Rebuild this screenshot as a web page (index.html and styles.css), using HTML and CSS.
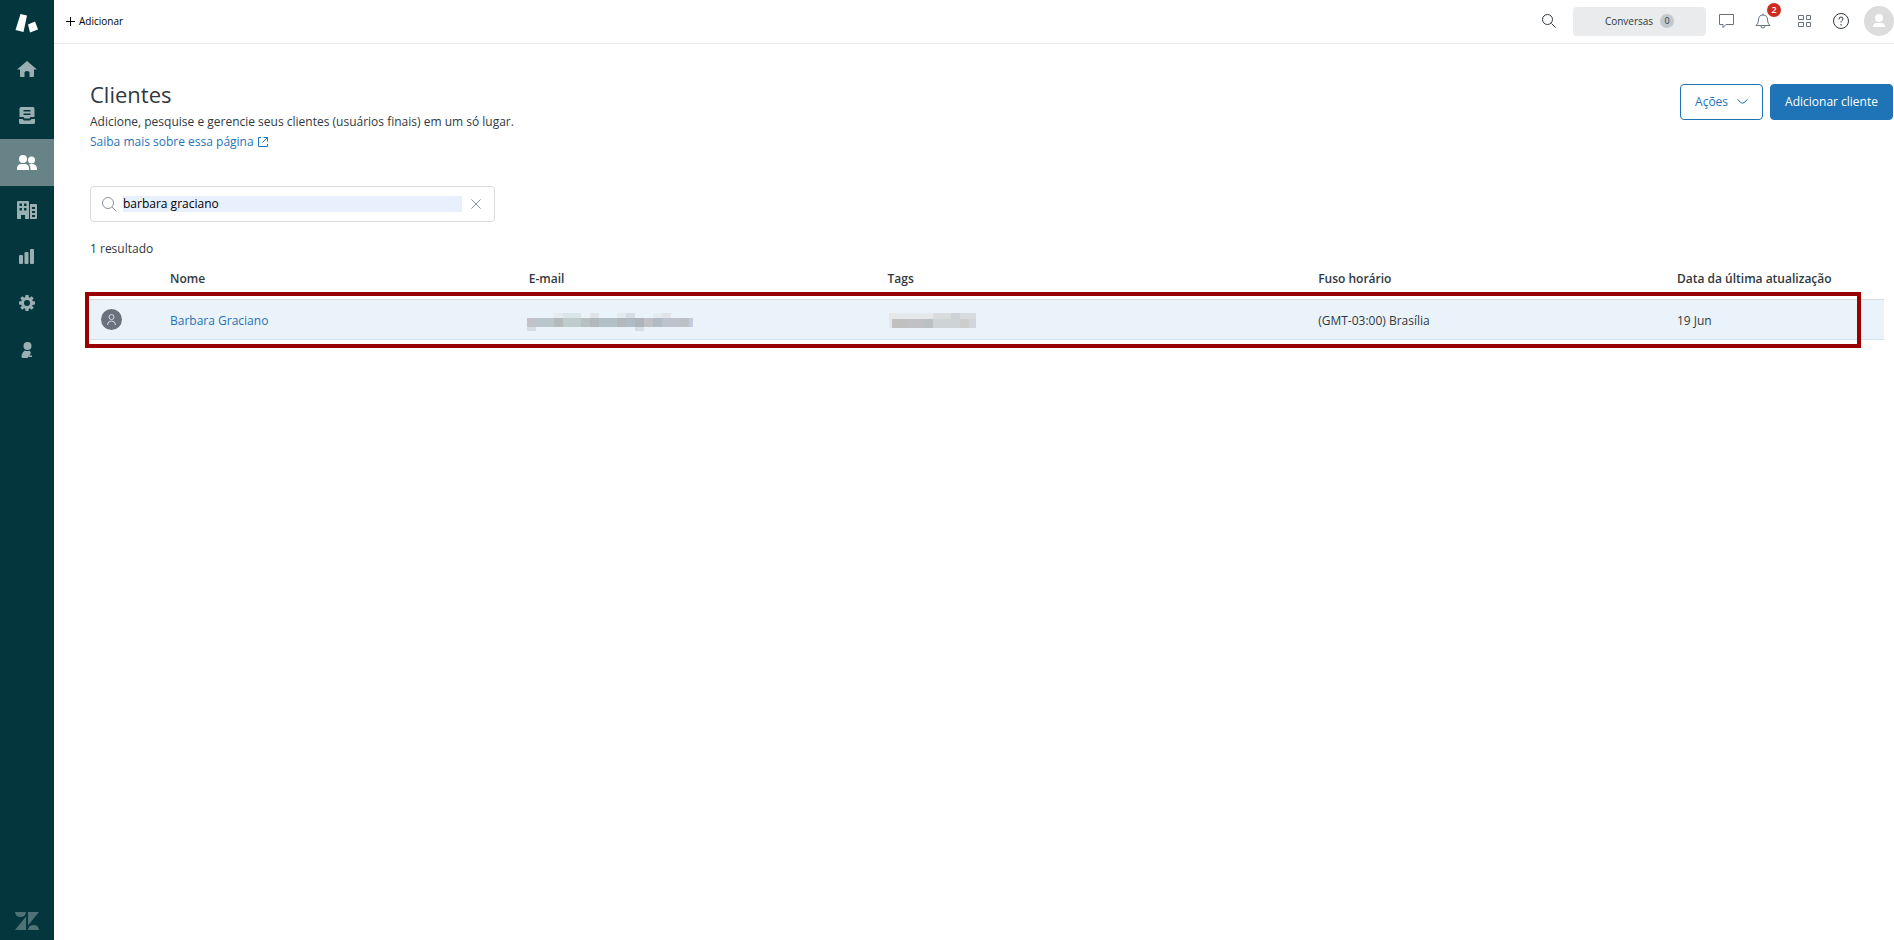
FILE: index.html
```
<!DOCTYPE html>
<html lang="pt-BR">
<head>
    <meta charset="UTF-8">
    <meta name="viewport" content="width=device-width, initial-scale=1.0">
    <title>Clientes</title>
    <link rel="stylesheet" href="styles.css">
</head>
<body>
    <div class="app">
        <nav class="sidebar" aria-label="Principal">
            <div class="logo">
                <svg width="24" height="20" viewBox="0 0 24 20"><path d="M5.500 1 12 2.500 8.500 19 .5 17zM13 11.500l7-3 3 8-8 3z" fill="#fff"/></svg>
            </div>
            <a href="#" class="nav-item" aria-label="Página inicial">
                <svg width="20" height="18" viewBox="0 0 20 18"><path d="M10 1 0 9.500h3V16q0 1 1 1h3.500v-4.500q0-1.500 2.500-1.500t2.500 1.500V17H16q1 0 1-1V9.500h3z"/></svg>
            </a>
            <a href="#" class="nav-item" aria-label="Visualizações">
                <svg width="16" height="18" viewBox="0 0 16 18"><path fill-rule="evenodd" d="M2 0Q.5 0 .5 1.500V10h4l1 1.500h5l1-1.500h4V1.500Q15.500 0 14 0zm2.500 3h7v1.500h-7zm0 3.500h7V8h-7zM0 12h3.500L5 13.500h6l1.500-1.500H16v3.500q0 1.500-1.500 1.500h-13Q0 17 0 15.500z"/></svg>
            </a>
            <a href="#" class="nav-item active" aria-label="Clientes">
                <svg width="20" height="18" viewBox="0 0 20 18"><circle cx="6" cy="5" r="4"/><circle cx="14.500" cy="6" r="3.500"/><path d="M0 16v-1.500q0-4.500 4.500-4.500h3q4.500 0 4.500 4.500V16zM13.500 16v-1.500q0-2.500-1.500-4 1-.5 2.500-.5 5.500 0 5.500 5v1z"/></svg>
            </a>
            <a href="#" class="nav-item" aria-label="Organizações">
                <svg width="20" height="18" viewBox="0 0 20 18"><path fill-rule="evenodd" d="M1 0h10q1 0 1 1v17H8v-4H4v4H0V1q0-1 1-1zm1.500 2.500V5H5V2.500zm4.500 0V5h2.500V2.500zM2.500 7v2.500H5V7zM7 7v2.500h2.500V7zM13 3h6q1 0 1 1v13q0 1-1 1h-6zm2 3v2h3V6zm0 4v2h3v-2zm0 4v2h3v-2z"/></svg>
            </a>
            <a href="#" class="nav-item" aria-label="Relatórios">
                <svg width="16" height="16" viewBox="0 0 16 16"><rect x="0" y="6" width="4" height="9" rx="1"/><rect x="5.500" y="3" width="4" height="12" rx="1"/><rect x="11" y="0" width="4" height="15" rx="1"/></svg>
            </a>
            <a href="#" class="nav-item" aria-label="Configurações">
                <svg width="18" height="18" viewBox="-9 -8 18 18"><circle r="4.500" fill="none" stroke="currentColor" stroke-width="3"/><path d="M-1.500-8h3l.5 3h-4zM-1.500 8h3l.5-3h-4zM-8-1.500v3l3 .5v-4zM8-1.500v3l-3 .5v-4zM-6.700-4.700l2-2 2.500 2-2.500 2.500zM6.700-4.700l-2-2-2.500 2 2.500 2.500zM-6.700 4.700l2 2 2.500-2-2.500-2.500zM6.700 4.700l-2 2-2.500-2 2.500-2.500z"/></svg>
            </a>
            <a href="#" class="nav-item" aria-label="Administrador">
                <svg width="12" height="17" viewBox="0 0 12 17"><circle cx="6.500" cy="4" r="4"/><path d="M4 8.500q2.500 1 4.500 0Q10.500 10 9.500 12t-3 4H2Q0 16 .5 14q.5-4 3.500-5.500z"/><path d="M8 13.500h3V15H8z"/></svg>
            </a>
            <div class="zendesk">
                <svg width="24" height="18" viewBox="0 0 24 18"><path d="M0 0h11Q10.500 5 5.500 5T0 0zM11 4.500V18H0zM13 13.500V0h11zM13 18q.5-5 5.500-5t5.500 5z"/></svg>
            </div>
        </nav>

        <div class="page">
            <header class="topbar">
                <button class="add">
                    <svg width="9" height="9" viewBox="0 0 9 9"><path d="M4.500 0v9M0 4.500h9" stroke="currentColor"/></svg>
                    Adicionar
                </button>
                <div class="tools">
                    <button class="tool search-tool" aria-label="Pesquisar">
                        <svg width="16" height="16" viewBox="0 0 16 16"><circle cx="6.500" cy="6.500" r="5"/><path d="m10.500 10.500 4 4"/></svg>
                    </button>
                    <button class="conversations">Conversas <span class="count">0</span></button>
                    <button class="tool" aria-label="Mensagens">
                        <svg width="16" height="16" viewBox="0 0 16 16"><path d="M.5 1.500h14v10H7l-3 3v-3H.5z"/></svg>
                    </button>
                    <button class="tool bell" aria-label="Notificações">
                        <svg width="16" height="16" viewBox="0 0 16 16"><path d="M1 12.500Q3.500 10.500 3.500 7q0-5 4.500-5t4.500 5q0 3.500 2.500 5.500zM6 13q0 2 2 2t2-2M8 .5V2"/></svg>
                        <span class="badge">2</span>
                    </button>
                    <button class="tool" aria-label="Produtos">
                        <svg width="14" height="14" viewBox="0 0 14 14"><path d="M.5 1.500h5v4h-5zM8.500 1.500h4v4h-4zM.5 8.500h5v4h-5zM8.500 8.500h4v4h-4z"/></svg>
                    </button>
                    <button class="tool help" aria-label="Ajuda">
                        <svg width="18" height="18" viewBox="0 0 18 18"><circle cx="9" cy="9" r="7.500"/><path d="M7 7.500Q7 5 9 5t2 2q0 1-1 1.500T9 10.500M9 12v1.500"/></svg>
                    </button>
                    <button class="avatar" aria-label="Perfil">
                        <svg width="30" height="30" viewBox="0 0 30 30"><circle cx="15" cy="15" r="15" fill="#dcdcdc"/><circle cx="15" cy="12" r="4" fill="#fff"/><path d="M9 21q0-4 4-4h4q4 0 4 4z" fill="#fff"/></svg>
                    </button>
                </div>
            </header>

            <main class="content">
                <div class="heading">
                    <div>
                        <h1>Clientes</h1>
                        <p>Adicione, pesquise e gerencie seus clientes (usuários finais) em um só lugar.</p>
                        <a href="#" class="learn-more">Saiba mais sobre essa página
                            <svg width="10" height="10" viewBox="0 0 10 10"><path d="M3 .5H.5v9h9V7M5.500.5h4v4M9.500.5l-5 5"/></svg></a>
                    </div>
                    <div class="actions">
                        <button class="btn">Ações
                            <svg width="11" height="6" viewBox="0 0 11 6"><path d="M.5.5 4 3.700q1.500 1 3 0L10.500.5"/></svg>
                        </button>
                        <button class="btn primary">Adicionar cliente</button>
                    </div>
                </div>

                <div class="search-box">
                    <svg width="15" height="15" viewBox="0 0 15 15"><circle cx="6" cy="6" r="5.500"/><path d="m10 10 4.500 4.500"/></svg>
                    <input type="text" value="barbara graciano" aria-label="Pesquisar clientes">
                    <button class="clear" aria-label="Limpar">
                        <svg width="10" height="10" viewBox="0 0 10 10"><path d="m.5.5 9 9m0-9-9 9"/></svg>
                    </button>
                </div>

                <p class="result-count">1 resultado</p>

                <div class="table-wrap">
                    <table>
                        <thead>
                            <tr>
                                <th class="col-avatar"></th>
                                <th class="col-name">Nome</th>
                                <th class="col-email">E-mail</th>
                                <th class="col-tags">Tags</th>
                                <th class="col-zone">Fuso horário</th>
                                <th>Data da última atualização</th>
                            </tr>
                        </thead>
                        <tbody>
                            <tr>
                                <td class="user-cell">
                                    <svg width="21" height="21" viewBox="0 0 21 21"><circle cx="10.500" cy="10.500" r="10.500" fill="#68737d"/><path d="M6.500 16q0-4 4-4t4 4" fill="none" stroke="#d8dcde"/><circle cx="10.500" cy="8" r="2.500" fill="none" stroke="#d8dcde"/></svg>
                                </td>
                                <td><a href="#">Barbara Graciano</a></td>
                                <td>
                                    <svg width="167" height="20" viewBox="2 -2 167 20" shape-rendering="crispEdges" overflow="visible"><path d="M27 0h9v5h-9zM90 0h9v5h-9zM126 0h9v5h-9z" fill="#e5ebee"/><path d="M36 0h18v5H36z" fill="#dbe5e8"/><path d="M63 0h9v5h-9zM135 0h9v5h-9z" fill="#e0e3ea"/><path d="M99 0h9v5h-9zM0 14h9v4H0zM108 14h9v4h-9z" fill="#d5dee5"/><path d="M0 5h9v9H0z" fill="#c4c1c8"/><path d="M9 5h18v9H9z" fill="#b9c6cb"/><path d="M27 5h9v9h-9z" fill="#b5bbba"/><path d="M36 5h18v9H36z" fill="#becccd"/><path d="M54 5h9v9h-9z" fill="#b9c0c2"/><path d="M63 5h9v9h-9zM90 5h9v9h-9z" fill="#b2b8bc"/><path d="M72 5h18v9H72z" fill="#b2c1c5"/><path d="M99 5h9v9h-9zM126 5h9v9h-9z" fill="#b1bbc6"/><path d="M108 5h9v9h-9z" fill="#afb3be"/><path d="M117 5h9v9h-9z" fill="#c0c0c5"/><path d="M135 5h18v9h-18z" fill="#bec2cc"/><path d="M153 5h9v9h-9z" fill="#bdc0c4"/><path d="M162 5h4v9h-4z" fill="#c5cce1"/></svg>
                                </td>
                                <td>
                                    <svg width="88" height="16" viewBox="0 0 88 16" shape-rendering="crispEdges"><path d="M1 0h44v15H1z" fill="#e5e7e9"/><path d="M45 0h43v6H45z" fill="#d8dcdd"/><path d="M63 0h9v6h-9z" fill="#ccd2d5"/><path d="M4 6h14v9H4z" fill="#c0c0be"/><path d="M18 6h18v9H18z" fill="#c1c0c4"/><path d="M36 6h9v9h-9z" fill="#bbc1c1"/><path d="M45 6h27v9H45z" fill="#ced3d5"/><path d="M72 6h9v9h-9z" fill="#cdcecc"/><path d="M81 6h7v9h-7z" fill="#d1d6db"/></svg>
                                </td>
                                <td>(GMT-03:00) Brasília</td>
                                <td>19 Jun</td>
                            </tr>
                        </tbody>
                    </table>
                    <div class="highlight"></div>
                </div>
            </main>
        </div>
    </div>
</body>
</html>
```
FILE: styles.css
```
* {
    box-sizing: border-box;
}
body {
    margin: 0;
    font-family: "Open Sans", "Noto Sans", sans-serif;
    font-size: 12px;
    line-height: 20px;
    color: #2f3941;
    background-color: #fff;
}
a {
    color: #1f73b7;
    text-decoration: none;
}
button {
    font: inherit;
    color: inherit;
    background: none;
    border: none;
    padding: 0;
    cursor: pointer;
}
svg {
    display: block;
}
.app {
    display: flex;
    min-height: 100vh;
}
.sidebar {
    flex: none;
    width: 54px;
    display: flex;
    flex-direction: column;
    background-color: #03363d;
}
.logo {
    height: 45px;
    display: flex;
    align-items: center;
    justify-content: center;
}
.nav-item {
    height: 47px;
    display: flex;
    align-items: center;
    justify-content: center;
    color: #9aafb1;
}
.nav-item svg {
    fill: currentColor;
}
.nav-item.active {
    background-color: #688387;
    color: #fff;
}
.zendesk {
    margin-top: auto;
    padding-bottom: 10px;
    display: flex;
    justify-content: center;
}
.zendesk svg {
    fill: #4f7277;
}
.page {
    flex: 1;
    min-width: 0;
}
.topbar {
    height: 44px;
    display: flex;
    justify-content: space-between;
    border-bottom: 1px solid #e9ebed;
    padding-left: 12px;
    font-size: 10px;
}
.add {
    display: flex;
    align-items: center;
    gap: 4px;
    height: 42px;
    color: #000;
}
.tools {
    display: flex;
    align-items: center;
    height: 42px;
    color: #68737d;
}
.tool {
    width: 36px;
    display: flex;
    justify-content: center;
}
.tool svg, .btn svg, .search-box svg, .learn-more svg {
    fill: none;
    stroke: currentColor;
}
.search-tool {
    width: 48px;
    color: #2f3941;
}
.conversations {
    display: flex;
    align-items: center;
    justify-content: center;
    gap: 7px;
    width: 133px;
    height: 29px;
    margin-right: 3px;
    border-radius: 4px;
    background-color: #e9ebed;
    color: #2f3941;
}
.count {
    width: 14px;
    height: 14px;
    border-radius: 7px;
    background-color: #c2c8cc;
    font-size: 9px;
    line-height: 14px;
}
.bell {
    position: relative;
    margin-right: 6px;
}
.badge {
    position: absolute;
    top: -10px;
    right: 0;
    width: 14px;
    height: 14px;
    border-radius: 7px;
    background-color: #cc2b1d;
    color: #fff;
    font-size: 9px;
    font-weight: 600;
    line-height: 14px;
}
.help {
    color: #2f3941;
}
.avatar {
    margin-left: 5px;
}
.content {
    padding: 40px 0 0 36px;
}
.heading {
    display: flex;
    justify-content: space-between;
    padding-right: 1px;
}
h1 {
    margin: 0 0 8px;
    font-size: 22px;
    font-weight: 400;
    line-height: 20px;
}
p {
    margin: 0;
}
.learn-more {
    display: flex;
    align-items: center;
    gap: 4px;
}
.actions {
    display: flex;
    gap: 7px;
}
.btn {
    display: flex;
    align-items: center;
    gap: 9px;
    height: 36px;
    padding: 0 14px;
    border: 1px solid #1f73b7;
    border-radius: 4px;
    color: #1f73b7;
}
.btn.primary {
    background-color: #1f73b7;
    color: #fff;
}
.search-box {
    display: flex;
    align-items: center;
    width: 405px;
    height: 36px;
    margin-top: 34px;
    padding: 0 13px 0 11px;
    border: 1px solid #d8dcde;
    border-radius: 4px;
    color: #87929d;
}
.search-box input {
    flex: 1;
    min-width: 0;
    height: 16px;
    margin: 0 9px 0 6px;
    padding: 0;
    border: none;
    outline: none;
    background-color: #e8f0fe;
    color: #000;
    font: inherit;
    line-height: 16px;
}
.result-count {
    margin-top: 17px;
}
.table-wrap {
    position: relative;
    margin: 7px 10px 0 0;
}
table {
    width: 100%;
    border-collapse: collapse;
    table-layout: fixed;
}
th {
    height: 33px;
    padding: 0 0 6px;
    font-weight: 600;
    text-align: left;
}
td {
    height: 40px;
    padding: 4px 0 0;
    background-color: #ebf3fa;
    border-top: 1px solid #d8dcde;
    border-bottom: 1px solid #cee2f2;
}
.col-avatar {
    width: 80px;
}
.col-name, .col-email {
    width: 20%;
}
.col-tags {
    width: 24%;
}
.col-zone {
    width: 20%;
}
.user-cell {
    padding: 0 0 0 11px;
}
/* frame drawn around the result row */
.highlight {
    position: absolute;
    top: 26px;
    left: -5px;
    right: 23px;
    height: 56px;
    border: 4px solid #990000;
    pointer-events: none;
}
```
